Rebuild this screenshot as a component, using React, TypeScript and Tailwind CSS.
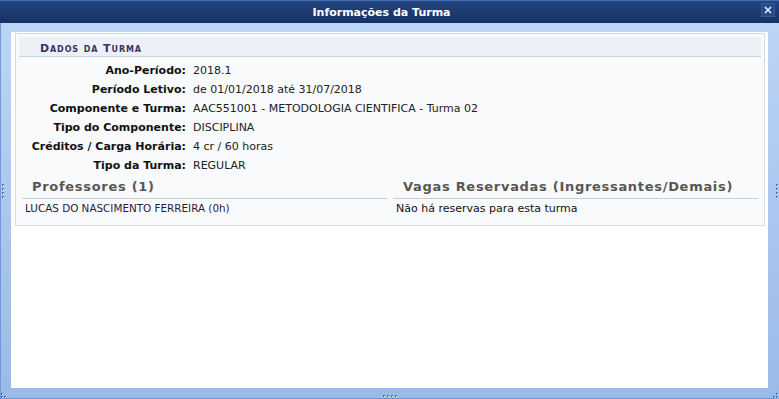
import React from "react";

const rows: [string, string][] = [
  ["Ano-Período:", "2018.1"],
  ["Período Letivo:", "de 01/01/2018 até 31/07/2018"],
  ["Componente e Turma:", "AAC551001 - METODOLOGIA CIENTIFICA - Turma 02"],
  ["Tipo do Componente:", "DISCIPLINA"],
  ["Créditos / Carga Horária:", "4 cr / 60 horas"],
  ["Tipo da Turma:", "REGULAR"],
];

function Dot() {
  return (
    <div className="relative w-[2px] h-[2px]">
      <div className="absolute left-0 top-0 w-[2px] h-[2px] bg-[#3f6fb8]" />
      <div className="absolute left-[1px] top-[1px] w-[1px] h-[1px] bg-white" />
    </div>
  );
}

export default function App() {
  return (
    <div
      className="relative w-[779px] h-[399px] flex flex-col overflow-hidden"
      style={{ fontFamily: '"DejaVu Sans", Verdana, sans-serif' }}
    >
      {/* title bar */}
      <div className="relative h-[23px] shrink-0 border-t border-[#4670b4] bg-gradient-to-b from-[#23447f] to-[#173163] flex items-center justify-center pr-[16px]">
        <span className="text-white font-bold text-[11px] leading-none">Informações da Turma</span>
        <div className="absolute right-[4px] top-[2px] w-[14px] h-[14px] bg-[#284a8c] border border-[#35599a] flex items-center justify-center">
          <svg width="8" height="8" viewBox="0 0 8 8">
            <path d="M1 1 L7 7 M7 1 L1 7" stroke="#ffffff" strokeWidth="1.4" />
          </svg>
        </div>
      </div>

      {/* frame */}
      <div className="flex-1 flex flex-col bg-gradient-to-b from-[#bcd4f6] to-[#9bbae8] border-l border-[#6f9ad8] border-b border-b-[#6f9ad8] pl-[10px] pr-[11px] pt-[9px] pb-[10px]">
        <div className="flex-1 bg-white pl-[4px] pr-[3px] pt-[1px]">
          <div className="border border-[#d8dbe0] bg-[#f9fafc] p-[3px] pb-[5px]">
            <div className="h-[20px] bg-[#edf1f7] border-b border-[#cad3e2] flex items-center pt-[3px] pl-[21px]">
              <span
                className="text-[11px] font-bold text-[#3b3064] tracking-[0.9px] leading-none"
                style={{ fontVariant: "small-caps" }}
              >
                Dados da Turma
              </span>
            </div>
            <div className="mt-[4px] flex flex-col">
              {rows.map(([l, v]) => (
                <div key={l} className="h-[19px] flex items-center text-[11px] leading-none">
                  <div className="w-[167px] text-right font-bold text-[#111]">{l}</div>
                  <div className="pl-[7px] text-[#222]">{v}</div>
                </div>
              ))}
            </div>
            <div className="flex px-[3px] gap-[6px]">
              <div className="flex-1 flex flex-col">
                <div className="pt-[4px] pb-[3px] border-b border-[#c6cfdd] pl-[10px]">
                  <span className="block text-[13px] leading-[16px] font-bold text-[#5a5650] tracking-[0.7px]">
                    Professores (1)
                  </span>
                </div>
                <div className="h-[20px] flex items-center pl-[3px] text-[10.4px] text-[#2a1a40]">
                  LUCAS DO NASCIMENTO FERREIRA (0h)
                </div>
              </div>
              <div className="flex-1 flex flex-col">
                <div className="pt-[4px] pb-[3px] border-b border-[#c6cfdd] pl-[10px]">
                  <span className="block text-[13px] leading-[16px] font-bold text-[#5a5650] tracking-[0.7px]">
                    Vagas Reservadas (Ingressantes/Demais)
                  </span>
                </div>
                <div className="h-[21px] flex items-center pl-[3px] text-[11px] text-[#111]">
                  Não há reservas para esta turma
                </div>
              </div>
            </div>
          </div>
        </div>
      </div>

      {/* resize handles */}
      <div className="absolute left-[2px] top-[184px] flex flex-col gap-[2px]">
        <Dot /><Dot /><Dot /><Dot />
      </div>
      <div className="absolute right-[1px] top-[184px] flex flex-col gap-[2px]">
        <Dot /><Dot /><Dot /><Dot />
      </div>
      <div className="absolute left-[383px] top-[395px] flex gap-[2px]">
        <Dot /><Dot /><Dot /><Dot />
      </div>
      <div className="absolute left-[1px] top-[393px] flex flex-col gap-[1px]">
        <div className="flex"><Dot /></div>
        <div className="flex gap-[1px]"><Dot /><Dot /></div>
      </div>
      <div className="absolute right-[1px] top-[393px] flex flex-col items-end gap-[1px]">
        <div className="flex"><Dot /></div>
        <div className="flex gap-[1px]"><Dot /><Dot /></div>
      </div>
    </div>
  );
}
